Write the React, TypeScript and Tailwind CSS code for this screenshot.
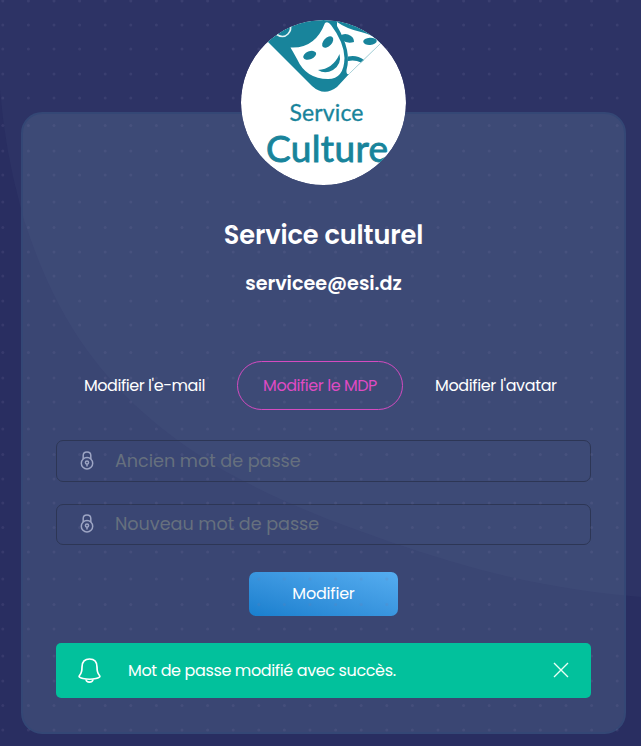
import React from 'react';

const family = "font-['Poppins','Inter',sans-serif]";

function Backdrop() {
  return (
    <svg className="absolute inset-0" width="641" height="746" aria-hidden="true">
      <path
        d="M0 0V90Q5 150 20 205Q24 222 31 240C45 280 64 318 87 350C105 375 128 400 152 420C174 439 197 454 223 470C255 488 290 504 330 520C370 535 410 549 450 561C512 580 580 592 641 597V0Z"
        fill="#2d3365"
      />
    </svg>
  );
}

function Dots() {
  const rows = [1, 25, 49, 74, 98, 125.5, 151, 175, 202, 227.5, 252, 276, 301, 325, 352.5, 378, 402, 429, 454.5, 479, 503, 527.5, 552, 579, 604.5, 629, 656, 681, 705.5, 730];
  const cols = Array.from({ length: 25 }, (_, i) => 2.8 + i * 25.6);
  return (
    <svg className="pointer-events-none absolute inset-0" width="641" height="746" aria-hidden="true">
      <g fill="#7c79a6" opacity="0.17">
        {rows.map((y) => cols.map((x) => <circle key={`${x}-${y}`} cx={x} cy={y} r="1.5" />))}
      </g>
    </svg>
  );
}

function Avatar() {
  return (
    <svg className="relative block h-[165px] w-[165px] rounded-full" viewBox="0 0 165 165" role="img" aria-label="Service Culture">
      <defs>
        <clipPath id="round"><circle cx="82.5" cy="82.5" r="82.5" /></clipPath>
      </defs>
      <g clipPath="url(#round)">
        <rect width="165" height="165" fill="#fff" />
        <path d="M20 15L71 66Q83 77 96 67L109 53L140 23V0H20Z" fill="#18849b" />
        {/* sad mask, behind */}
        <path d="M96 2Q106 9 120 12Q132 15 141 22L108 54Q105 55 105.500 50Q111 31 96 6Z" fill="#fff" />
        <path d="M99 16Q104 12 110 16Q113 18 113 22Q106 24 101 20Z" fill="#18849b" />
        <ellipse cx="129" cy="21.300" rx="6.800" ry="3.600" transform="rotate(-4 129 21.300)" fill="#18849b" />
        <path d="M107 36.500Q116 34.500 123 40L120 42.500Q114 39.500 107 41Z" fill="#18849b" />
        <path d="M109 53L140 23" stroke="#9fcbd2" strokeWidth=".7" />
        {/* smiling mask, in front */}
        <path d="M49.500 27.500Q74 29 84 3Q87 1 90 5Q103 22 103.500 38Q103 59 87 59Q65 59 56 39Q51 30 49.500 27.500Z" fill="#fff" />
        <ellipse cx="68.700" cy="35.300" rx="6.800" ry="4" transform="rotate(-22 68.700 35.300)" fill="#18849b" />
        <ellipse cx="86.700" cy="22" rx="6.800" ry="4.200" transform="rotate(-47 86.700 22)" fill="#18849b" />
        <path d="M77 50Q92 49 98.500 34Q101 44 92 50Q84 54.500 77 50Z" fill="#18849b" />
        <path d="M35 14Q42 19 47 14Q51 10 49 4" fill="none" stroke="#e4f4f5" strokeWidth="1.600" />
        <g fill="#18849b" stroke="#18849b" fontFamily="Lato, sans-serif">
          <text x="48.500" y="100.500" fontSize="23" strokeWidth=".3" textLength="74" lengthAdjust="spacing">Service</text>
          <text x="25" y="141.500" fontSize="37" strokeWidth=".9" textLength="122" lengthAdjust="spacing">Culture</text>
        </g>
      </g>
    </svg>
  );
}

function Lock() {
  return (
    <svg className="-mt-[2px] ml-[23px] h-[19px] w-[14px] shrink-0" viewBox="0 0 14 19" fill="none" stroke="#9da5c4" strokeWidth="1.500">
      <circle cx="7" cy="12.300" r="5.700" />
      <path d="M3.200 8V4.500Q3.200 1 7 1T10.800 4.500V8" />
      <circle cx="7" cy="11.500" r="1.600" />
      <path d="M7 13V15.500" />
    </svg>
  );
}

function PasswordField({ label, className }: { label: string; className: string }) {
  return (
    <label className={`flex w-full items-center rounded-[7px] border border-[#2d3655] ${className}`}>
      <Lock />
      <input
        type="password"
        placeholder={label}
        className="ml-[21px] w-[400px] bg-transparent text-[17.6px] tracking-[-0.02px] text-white outline-none placeholder:text-[#66707e]"
      />
    </label>
  );
}

export default function App() {
  return (
    <main className={`relative h-[746px] w-[641px] overflow-hidden bg-[#292e61] pt-5 pl-[21px] text-white ${family}`}>
      <Backdrop />
      <section className="relative mt-[92px] flex h-[622px] w-[605px] flex-col items-center rounded-[21px] border-2 border-[#344775] bg-[rgba(110,144,170,0.25)] px-[33px]">
        <div className="z-10 -mt-[94px]"><Avatar /></div>
        <h1 className="mt-[32px] text-[25.6px] leading-9 font-semibold tracking-[-0.1px] whitespace-nowrap">Service culturel</h1>
        <h2 className="mt-[17px] text-[19.2px] leading-7 font-semibold tracking-[-0.05px] whitespace-nowrap">servicee@esi.dz</h2>
        <nav className="mt-[63px] flex h-[49px] w-full items-center text-[16px] tracking-[-0.45px] whitespace-nowrap">
          <button className="ml-7 w-[121px] text-left">Modifier l'e-mail</button>
          <button className="ml-8 h-[49px] w-[166px] rounded-full border border-[#d44bc0] text-[#df4bc3]">Modifier le MDP</button>
          <button className="ml-8 w-[122px] text-left tracking-[-0.36px]">Modifier l'avatar</button>
        </nav>
        <PasswordField label="Ancien mot de passe" className="mt-[30px] h-[42px]" />
        <PasswordField label="Nouveau mot de passe" className="mt-[22px] h-[41px]" />
        <button className="mt-[27px] h-[44px] w-[149px] shrink-0 rounded-[7px] bg-linear-to-tr from-[#187fce] to-[#55adf0] text-[16px] tracking-[-0.2px]">Modifier</button>
        <div role="status" className="relative z-10 mt-[27px] flex h-[55px] w-full shrink-0 items-center rounded-[5px] bg-[#02c19c] px-[22px]">
          <svg className="h-[25px] w-[23px] shrink-0" viewBox="0 0 23 25" fill="none" stroke="white" strokeWidth="1.700" strokeLinejoin="round">
            <path d="M4 9C4 3.500 7 1 11.500 1S19 3.500 19 9C19 15 20 16 21.500 17.500C23 19 20 20 18 20.500Q11.500 22 5 20.500C3 20 0 19 1.500 17.500C3 16 4 15 4 9Z" />
            <path d="M8 21.500C8.500 25 14.500 25 15 21.500" />
          </svg>
          <span className="ml-[27px] pt-px text-[16px] tracking-[-0.37px] whitespace-nowrap">Mot de passe modifié avec succès.</span>
          <button aria-label="Fermer" className="-mt-px ml-auto">
            <svg className="h-4 w-4" viewBox="0 0 16 16" fill="none" stroke="#e8fff5" strokeWidth="1.400"><path d="M1 1L15 15M15 1L1 15" /></svg>
          </button>
        </div>
      </section>
      <Dots />
    </main>
  );
}
